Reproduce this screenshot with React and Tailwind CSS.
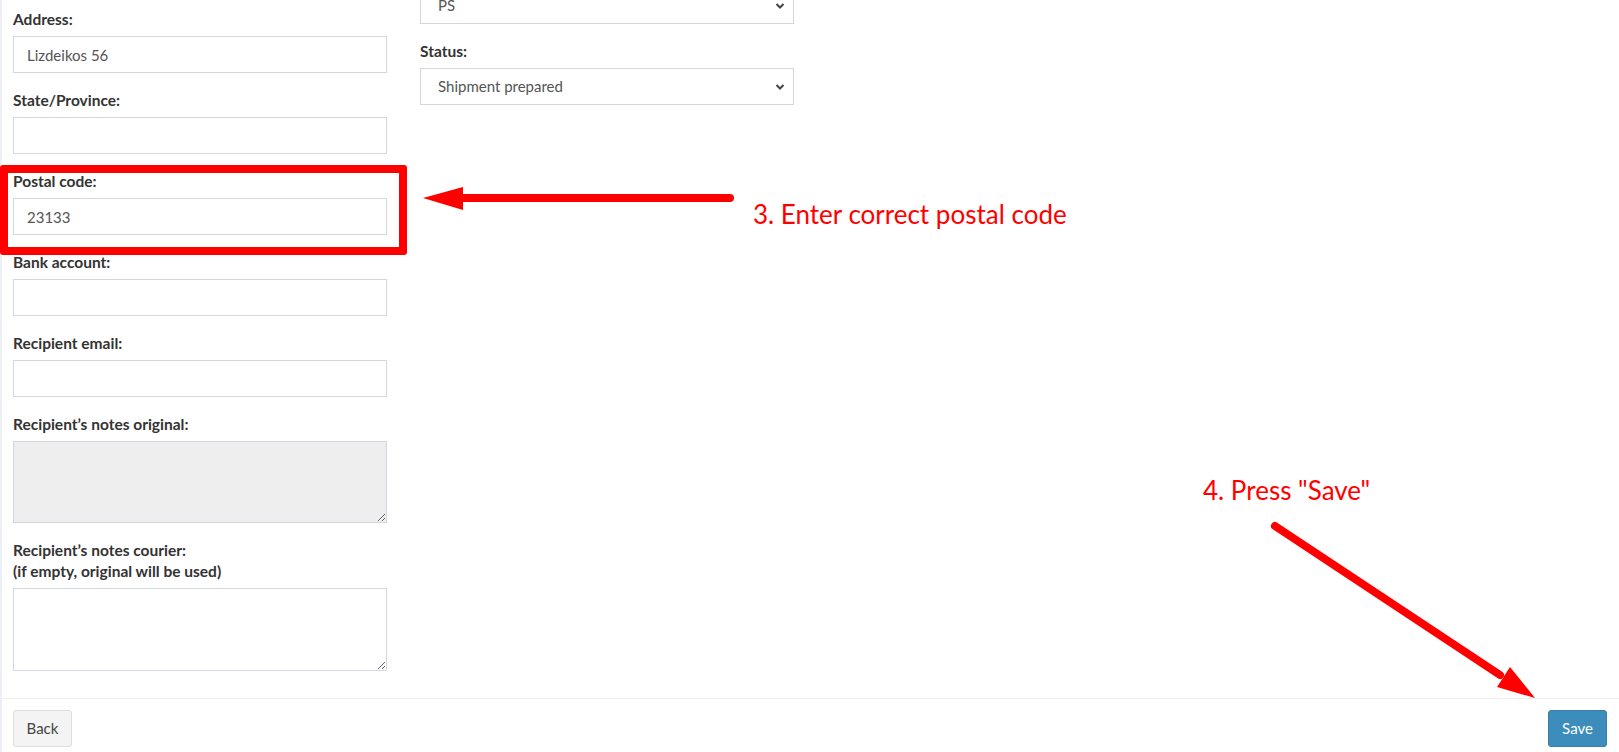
import React from "react";

function Field({ label, children }) {
  return (
    <div className="mb-[17px]">
      {label && (
        <label className="block text-[15.5px] font-bold leading-[21px] text-[#333] mb-[6px]">
          {label}
        </label>
      )}
      {children}
    </div>
  );
}

function TextInput({ value = "" }) {
  return (
    <input
      readOnly
      value={value}
      className="block w-[374px] h-[37px] border border-[#d2d6de] bg-white px-[13px] text-[15px] text-[#555] outline-none"
    />
  );
}

function SelectBox({ value }) {
  return (
    <div className="relative w-[374px] h-[37px] border border-[#d2d6de] bg-white flex items-center pl-[17px] text-[15px] text-[#555]">
      <span>{value}</span>
      <svg
        className="absolute right-[8px] top-1/2 -translate-y-1/2"
        width="10"
        height="7"
        viewBox="0 0 10 7"
      >
        <polyline points="1.5,1.5 5,5 8.5,1.5" fill="none" stroke="#444" strokeWidth="2" />
      </svg>
    </div>
  );
}

export default function App() {
  return (
    <div className="relative w-[1619px] h-[752px] overflow-hidden bg-[#ecf0f5] font-['Lato',sans-serif]">
      <div className="ml-[2px] h-full bg-white">
        {/* form body */}
        <div className="flex items-start gap-[33px] pl-[11px] pt-[9px] pb-[10px]">
          <div className="w-[374px]">
            <Field label="Address:">
              <TextInput value="Lizdeikos 56" />
            </Field>
            <Field label="State/Province:">
              <TextInput />
            </Field>
            <Field label="Postal code:">
              <TextInput value="23133" />
            </Field>
            <Field label="Bank account:">
              <TextInput />
            </Field>
            <Field label="Recipient email:">
              <TextInput />
            </Field>
            <Field label="Recipient’s notes original:">
              <textarea
                readOnly
                disabled
                className="block w-[374px] h-[82px] border border-[#d2d6de] bg-[#eee] outline-none"
              />
            </Field>
            <Field
              label={
                <>
                  Recipient’s notes courier:
                  <br />
                  (if empty, original will be used)
                </>
              }
            >
              <textarea
                readOnly
                className="block w-[374px] h-[83px] border border-[#d2d6de] bg-white outline-none"
              />
            </Field>
          </div>

          <div className="w-[374px] -mt-[22px]">
            <Field>
              <SelectBox value="PS" />
            </Field>
            <Field label="Status:">
              <SelectBox value="Shipment prepared" />
            </Field>
          </div>
        </div>

        {/* footer */}
        <div className="flex justify-between border-t border-[#f0f0f0] pt-[11px] pl-[11px] pr-[12px]">
          <button className="h-[37px] w-[59px] rounded-[3px] border border-[#ddd] bg-[#f4f4f4] text-[15px] text-[#444]">
            Back
          </button>
          <button className="h-[37px] w-[59px] rounded-[3px] border border-[#367fa9] bg-[#3c8dbc] text-[15px] text-white">
            Save
          </button>
        </div>
      </div>

      {/* annotations */}
      <div className="absolute left-0 top-[165px] w-[407px] h-[90px] border-[8px] border-[#ff0000] rounded-[3px] pointer-events-none" />

      <svg className="absolute inset-0 pointer-events-none" width="1619" height="752">
        <line x1="730" y1="198" x2="460" y2="198" stroke="#ff0000" strokeWidth="8" strokeLinecap="round" />
        <polygon points="423,198 463,187 463,210" fill="#ff0000" />
        <line x1="1275" y1="526" x2="1500" y2="675" stroke="#ff0000" strokeWidth="8" strokeLinecap="round" />
        <polygon points="1535,698 1497,687 1510,667" fill="#ff0000" />
      </svg>

      <div className="absolute left-[753px] top-[201px] text-[26px] leading-[26px] text-[#ff0000] whitespace-nowrap">
        3. Enter correct postal code
      </div>
      <div className="absolute left-[1203px] top-[477px] text-[26px] leading-[26px] text-[#ff0000] whitespace-nowrap">
        4. Press "Save"
      </div>
    </div>
  );
}
